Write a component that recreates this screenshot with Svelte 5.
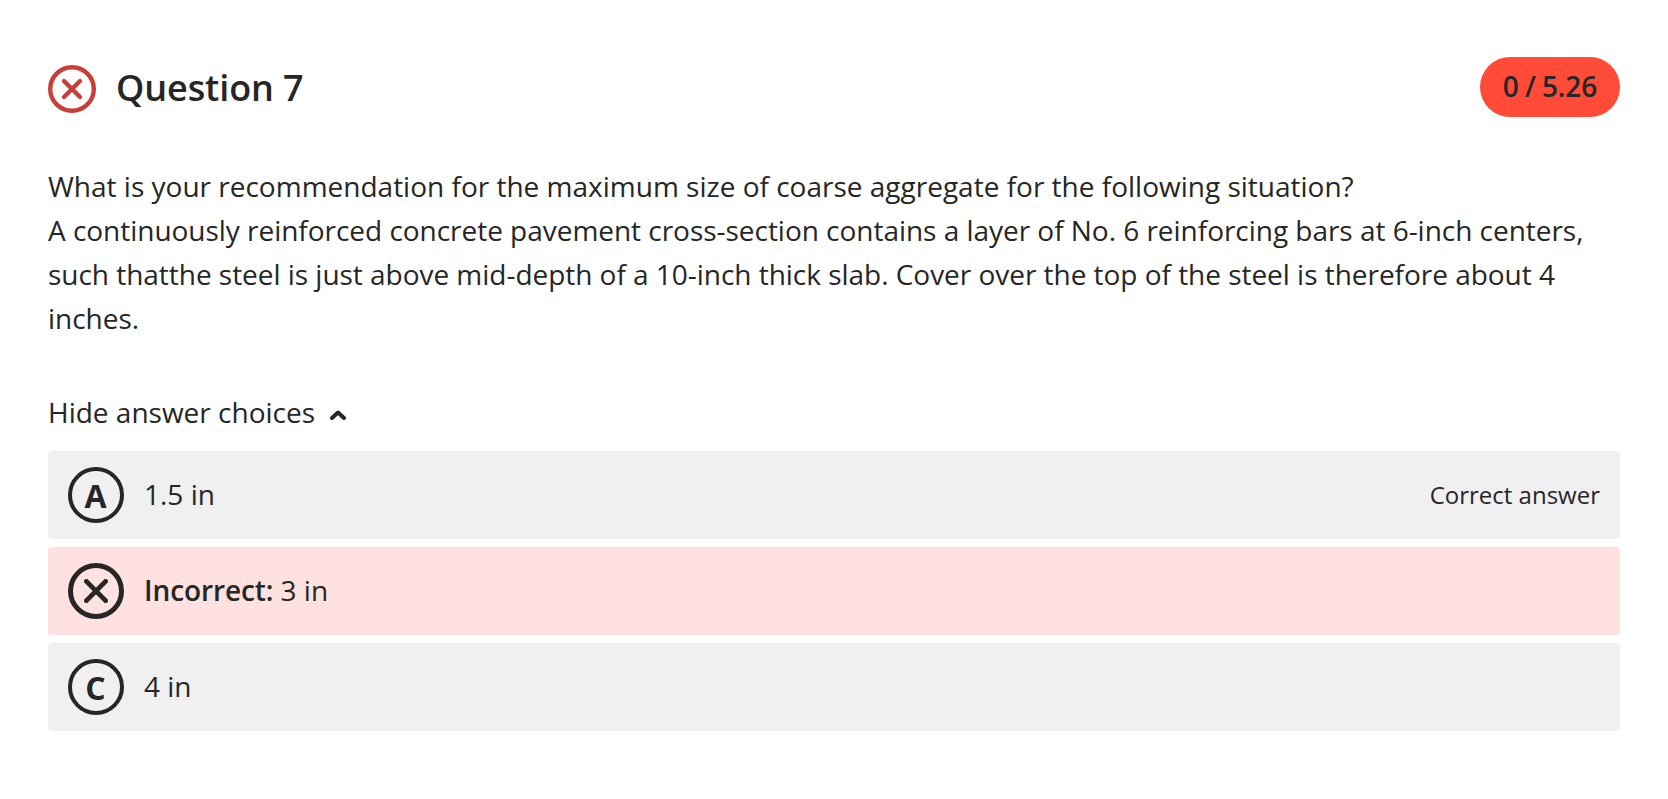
<script>
  const question = {
    title: 'Question 7',
    score: '0 / 5.26',
    lines: [
      'What is your recommendation for the maximum size of coarse aggregate for the following situation?',
      'A continuously reinforced concrete pavement cross-section contains a layer of No. 6 reinforcing bars at 6-inch centers, such thatthe steel is just above mid-depth of a 10-inch thick slab. Cover over the top of the steel is therefore about 4 inches.',
    ],
  };

  const choices = [
    { letter: 'A', text: '1.5 in', note: 'Correct answer' },
    { letter: 'B', text: '3 in', incorrect: true },
    { letter: 'C', text: '4 in' },
  ];

  let open = true;
</script>

<section class="question">
  <header>
    <svg class="status" viewBox="0 0 48 48">
      <circle cx="24" cy="24" r="21.8" />
      <path d="M16 16l16 16M32 16l-16 16" />
    </svg>
    <h2>{question.title}</h2>
    <span class="score">{question.score}</span>
  </header>

  <div class="prompt">
    {#each question.lines as line}
      <p>{line}</p>
    {/each}
  </div>

  <button class="toggle" on:click={() => (open = !open)}>
    {open ? 'Hide' : 'Show'} answer choices
    <svg class="chevron" class:closed={!open} viewBox="0 0 16 10">
      <path d="M2 8l6-5.5 6 5.5" />
    </svg>
  </button>

  {#if open}
    <ul>
      {#each choices as choice}
        <li class:incorrect={choice.incorrect}>
          <span class="badge">
            {#if choice.incorrect}
              <svg viewBox="0 0 24 24"><path d="M2.4 2.4l19.2 19.2M21.6 2.4l-19.2 19.2" /></svg>
            {:else}
              {choice.letter}
            {/if}
          </span>
          <span class="text">{#if choice.incorrect}<strong>Incorrect:</strong>{' '}{/if}{choice.text}</span>
          {#if choice.note}
            <span class="note">{choice.note}</span>
          {/if}
        </li>
      {/each}
    </ul>
  {/if}
</section>

<style>
  :global(body) {
    background: #fff;
  }

  .question {
    padding: 57px 48px 0;
    color: #262626;
    font-family: 'Open Sans', sans-serif;
    font-size: 28px;
    line-height: 44px;
  }

  header {
    display: flex;
    align-items: center;
    height: 60px;
  }

  svg {
    fill: none;
    stroke: currentColor;
    stroke-linecap: round;
    stroke-linejoin: round;
  }

  .status {
    width: 48px;
    height: 48px;
    margin: 4px 20px 0 0;
    color: #c73f38;
    stroke-width: 4.4;
  }

  h2 {
    margin: 2px 0 0;
    font-size: 36px;
    font-weight: 600;
    letter-spacing: -0.1px;
  }

  .score {
    box-sizing: border-box;
    width: 140px;
    height: 60px;
    margin-left: auto;
    border-radius: 30px;
    background: #ff4b37;
    font-weight: 600;
    line-height: 59px;
    letter-spacing: -0.1px;
    word-spacing: -1px;
    text-align: center;
  }

  .prompt {
    margin-top: 47px;
  }

  p {
    margin: 0;
  }

  p + p {
    letter-spacing: -0.03px;
  }

  .toggle {
    display: flex;
    align-items: center;
    gap: 15px;
    margin-top: 50px;
    padding: 0;
    border: 0;
    background: none;
    color: inherit;
    font: inherit;
    cursor: pointer;
  }

  .chevron {
    width: 16px;
    height: 10px;
    margin-top: 6px;
    stroke-width: 4;
  }

  .chevron.closed {
    transform: rotate(180deg);
  }

  ul {
    display: flex;
    flex-direction: column;
    gap: 8px;
    margin: 17px 0 0;
    padding: 0;
    list-style: none;
  }

  li {
    display: flex;
    align-items: center;
    box-sizing: border-box;
    height: 88px;
    padding: 0 20px;
    border-radius: 4px;
    background: #f0f0f0;
  }

  li.incorrect {
    background: #ffe1df;
  }

  .badge {
    display: flex;
    align-items: center;
    justify-content: center;
    box-sizing: border-box;
    width: 56px;
    height: 56px;
    margin-right: 20px;
    padding: 2px 1px 0 0;
    border: 4px solid #262626;
    border-radius: 50%;
    font-size: 32px;
    font-weight: 700;
  }

  .incorrect .badge {
    padding: 0;
    border-width: 5px;
  }

  .badge svg {
    width: 24px;
    height: 24px;
    stroke-width: 4.8;
  }

  .text {
    padding-bottom: 2px;
  }

  strong {
    font-weight: 600;
    letter-spacing: -0.1px;
  }

  .note {
    margin-left: auto;
    font-size: 24px;
  }
</style>
